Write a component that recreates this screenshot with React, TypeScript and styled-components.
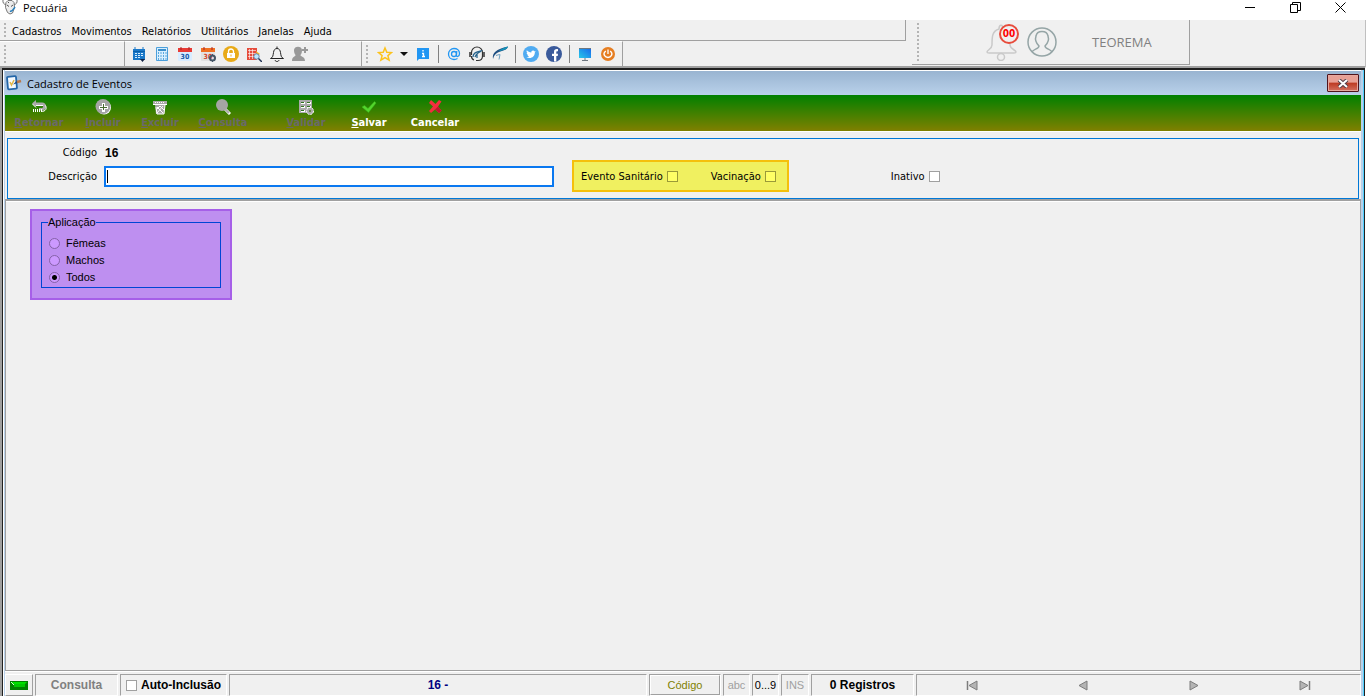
import React from 'react';
import styled, { createGlobalStyle, css } from 'styled-components';

const face = '#f0f0f0';
const shade = '#a0a0a0';
const uiFont = '"DejaVu Sans Condensed", "Noto Sans", sans-serif';
const segoe = '"Open Sans", "Noto Sans", sans-serif';
const msSans = '"Liberation Sans", Arial, sans-serif';

const Global = createGlobalStyle`
  * { box-sizing: border-box; }
  body { margin: 0; background: ${face}; color: #000; font: 11px/16px ${uiFont}; }
  button { font: inherit; color: inherit; padding: 0; margin: 0; border: 0; background: none; }
  svg { display: block; flex: none; }
`;

const Shell = styled.div`
  display: flex;
  flex-direction: column;
  min-height: 100vh;
`;

const TitleBar = styled.header`
  display: flex;
  align-items: center;
  height: 20px;
  padding: 0 20px 6px 2px;
  gap: 5px;
  background: #fff;
  font: 11px/16px ${segoe};
`;

const AppName = styled.span`
  flex: 1;
  padding-top: 2px;
`;

const WindowButtons = styled.div`
  display: flex;
  gap: 34px;
`;

const Bars = styled.div`
  display: flex;
  height: 46px;
  background: ${face};
`;

const BarStack = styled.div`
  flex: 1;
  min-width: 640px;
`;

const Grip = styled.i`
  width: 2px;
  align-self: stretch;
  margin: 3px 0;
  background: repeating-linear-gradient(#b4b4b4 0 2px, transparent 2px 4px);
`;

const MenuBar = styled.nav`
  display: flex;
  height: 21px;
  padding: 0 4px;
  gap: 6px;
  border-bottom: 1px solid ${shade};
  border-right: 1px solid ${shade};
`;

const MenuList = styled.div`
  display: flex;
  align-items: center;
  gap: 10px;
  padding-top: 3px;
`;

const MenuItem = styled.button`
  white-space: nowrap;
`;

const ToolRow = styled.div`
  display: flex;
  height: 25px;
`;

const ToolGroup = styled.div<{ $width: number; $gripped?: boolean }>`
  display: flex;
  align-items: center;
  gap: 7px;
  width: ${(p) => p.$width}px;
  padding-left: ${(p) => (p.$gripped ? 4 : 6)}px;
  border-right: 1px solid ${shade};
  border-top: 1px solid #fff;
  ${Grip} { margin-right: 2px; }
`;

const IconButton = styled.button<{ $narrow?: boolean }>`
  width: ${(p) => (p.$narrow ? 8 : 16)}px;
  height: 16px;
`;

const Divider = styled.i`
  width: 1px;
  height: 18px;
  background: #808080;
`;

const UserBar = styled.section`
  display: flex;
  width: 278px;
  height: 45px;
  margin-left: 6px;
  padding: 0 0 0 5px;
  border: solid ${shade};
  border-width: 0 1px 1px 0;
  align-items: center;
`;

const Bell = styled.button`
  position: relative;
  width: 34px;
  height: 38px;
  margin-left: 66px;
`;

const BellCount = styled.span`
  position: absolute;
  top: 1px;
  right: 0;
  width: 20px;
  height: 20px;
  border: 2px solid #e74c3c;
  border-radius: 50%;
  background: ${face};
  color: #f00;
  font: bold 10px/16px ${uiFont};
  text-align: center;
`;

const UserName = styled.span`
  margin-left: 27px;
  color: #808080;
  font: 13px/18px ${segoe};
`;

const BarRest = styled.div`
  width: 176px;
  border-right: 1px solid #c0c0c0;
`;

const Workspace = styled.main`
  flex: 1;
  display: flex;
  border-top: 2px solid ${shade};
  border-left: 2px solid ${shade};
  border-right: 1px solid #fff;
`;

const Window = styled.section`
  flex: 1;
  display: flex;
  flex-direction: column;
  min-width: 0;
  border: solid #202020;
  border-width: 2px 1px 0 1px;
  box-shadow: inset -1px 0 #4fd0ff, inset 1px 0 #fff;
  padding: 0 3px 0 2px;
  background: #b9d1ea;
`;

const Caption = styled.div`
  display: flex;
  align-items: center;
  gap: 5px;
  height: 25px;
  padding: 0 2px 0 1px;
  background: linear-gradient(#99b4d1, #b9d1ea);
  border-top: 1px solid #fff;
  font: 11px/16px ${segoe};
`;

const CaptionText = styled.h1`
  flex: 1;
  margin: 0;
  padding-top: 2px;
  font: inherit;
`;

const CloseButton = styled.button`
  display: grid;
  place-items: center;
  width: 32px;
  height: 18px;
  border: 1px solid #50141c;
  border-radius: 1px;
  background: linear-gradient(#e8a095 0 45%, #bd3a22 50%, #d37060);
  box-shadow: inset 0 0 0 1px #e6a89f;
`;

const Commands = styled.div`
  display: flex;
  height: 36px;
  background: linear-gradient(#008000, #808000);
`;

const Command = styled.button<{ $width: number; $gapBefore?: boolean }>`
  display: flex;
  flex-direction: column;
  align-items: center;
  width: ${(p) => p.$width}px;
  padding-top: 4px;
  margin-left: ${(p) => (p.$gapBefore ? 16 : 0)}px;
  font: bold 11px/15px ${uiFont};
  color: #fff;
  &:disabled { color: #696969; }
`;

const Form = styled.form`
  flex: 1;
  display: flex;
  flex-direction: column;
  background: ${face};
  border-top: 1px solid #fff;
`;

const Fields = styled.div`
  margin: 6px 2px 0;
  padding: 5px 0 6px;
  border: 1px solid #0078d7;
`;

const FieldRow = styled.div<{ $tall?: boolean }>`
  display: flex;
  align-items: center;
  height: ${(p) => (p.$tall ? 32 : 16)}px;
`;

const FieldLabel = styled.label`
  width: 89px;
  margin-right: 7px;
  padding-top: 2px;
  text-align: right;
`;

const Code = styled.output`
  padding: 2px 0 0 1px;
  font: bold 12px/16px ${msSans};
`;

const TextInput = styled.input`
  width: 450px;
  height: 21px;
  border: 2px solid #0a78f0;
  outline: 0;
  padding: 0 3px;
  font: inherit;
  background: linear-gradient(#000, #000) 1px 2px / 1px 13px no-repeat #fff;
`;

const Highlight = styled.div`
  display: flex;
  align-items: center;
  gap: 33px;
  height: 32px;
  margin: 0 102px 0 18px;
  padding: 0 11px 0 7px;
  background: #f0f060;
  border: 2px solid #f5c00c;
`;

const CheckLabel = styled.label`
  display: flex;
  align-items: center;
  gap: 4px;
  white-space: nowrap;
`;

const LabelText = styled.span`
  padding-top: 2px;
`;

const Tick = styled.input<{ $yellow?: boolean }>`
  appearance: none;
  width: 11px;
  height: 11px;
  margin: 0;
  border: 1px solid ${(p) => (p.$yellow ? '#9a9a38' : '#a0a0a0')};
  background: ${(p) => (p.$yellow ? '#ffff66' : '#fff')};
`;

const Sheet = styled.div`
  flex: 1;
  padding: 8px 24px;
  border: 1px solid ${shade};
  border-top: 2px solid ${shade};
  box-shadow: inset 0 1px #fff;
`;

const PurpleBox = styled.div`
  width: 202px;
  height: 91px;
  padding: 4px 9px 10px;
  background: #be8ff0;
  border: 2px solid #a65fe8;
`;

const Options = styled.fieldset`
  min-width: 0;
  height: 73px;
  margin: 0;
  padding: 5px 7px 0;
  border: 1px solid #0046d5;
  font: 11px/17px ${msSans};
`;

const Legend = styled.legend`
  margin-left: -1px;
  padding: 0;
  line-height: 15px;
`;

const RadioLabel = styled.label`
  display: flex;
  align-items: center;
  gap: 6px;
  height: 17px;
`;

const Radio = styled.input`
  appearance: none;
  width: 11px;
  height: 11px;
  margin: 0;
  border: 1px solid #8562a8;
  border-radius: 50%;
  background: #cc99ff;
  &:checked { background: radial-gradient(circle, #000 0 2px, #cc99ff 3px); }
`;

const Status = styled.footer`
  display: flex;
  gap: 2px;
  height: 25px;
  padding-top: 2px;
  border-top: 1px solid #fff;
  background: ${face};
  font: 11px/20px ${msSans};
`;

const sunken = css`
  border: solid;
  border-width: 1px;
  border-color: ${shade} #fff #fff ${shade};
`;

const Cell = styled.div<{ $width?: number; $tone?: string; $bold?: boolean }>`
  ${sunken}
  display: flex;
  align-items: center;
  justify-content: center;
  ${(p) => (p.$width ? `width: ${p.$width}px;` : 'flex: 1;')}
  color: ${(p) => p.$tone ?? '#000'};
  ${(p) => p.$bold && 'font-weight: bold; font-size: 12px;'}
  white-space: nowrap;
`;

const LedCell = styled.div`
  display: grid;
  place-items: center;
  width: 28px;
  border: solid;
  border-width: 1px;
  border-color: #fff ${shade} ${shade} #fff;
`;

const OrderButton = styled.button`
  align-self: stretch;
  flex: 1;
  border: 1px solid;
  border-color: #fff ${shade} ${shade} #fff;
  line-height: 18px;
`;

const NavCell = styled.nav`
  ${sunken}
  display: grid;
  grid-template-columns: repeat(4, 1fr);
  width: 445px;
`;

const NavButton = styled.button`
  display: grid;
  place-items: center;
`;

const Svg = ({ w = 16, h = 16, box, children }: { w?: number; h?: number; box?: string; children: React.ReactNode }) => (
  <svg width={w} height={h} viewBox={box ?? `0 0 ${w} ${h}`} fill="none" aria-hidden="true">{children}</svg>
);

const AppLogo = () => (
  <Svg>
    <path d="M1 .5c-.5 3 .5 5 3 5M15 .5c.5 3-.5 5-3 5M4 3.500l2-2h4l2 2 .5 5-2 5.500L8 15l-2.500-1.500-2-5z" stroke="#777" fill="#ececec" />
    <path d="M5 6l2 1.500M11 6L9 7.500M6 3l1 1" stroke="#555" />
    <path d="M8 12c2 1 3-1 5-4" stroke="#2a80bd" strokeWidth="1.500" />
  </Svg>
);

const Calendar = () => (
  <Svg>
    <path d="M2 3h12v11H2z" fill="#1b78c8" />
    <path d="M2 5.500h12" stroke="#0b5fa8" />
    <path d="M4 7.500h9M4 9.500h9M4 11.500h6" stroke="#d8efff" strokeDasharray="2 1" />
    <path d="M4 1v3M12 1v3" stroke="#1b78c8" />
    <path d="M9 13h5l-2.500 3z" fill="#124" />
  </Svg>
);

const Calculator = () => (
  <Svg>
    <path d="M2.500 1.500h11v13h-11z" fill="#d8efff" stroke="#4b9fdb" />
    <path d="M4 3h8v2H4z" fill="#3b8fcc" />
    <path d="M4.500 6v8M7 6v8M9.500 6v8M12 6v8" stroke="#5aa8de" strokeDasharray="2 1" />
  </Svg>
);

const Day30 = ({ orange }: { orange?: boolean }) => (
  <Svg>
    <rect x="1" y="2" width="14" height="13" rx="1" fill={orange ? '#e2e2e2' : '#d8ecff'} />
    <path d="M1 2h14v4H1z" fill={orange ? '#f07022' : '#e83b35'} />
    <path d="M4 1v3M12 1v3" stroke="#a22" strokeWidth="1" />
    <text x="8" y="13" textAnchor="middle" fontSize="7" fontWeight="bold" fontFamily={uiFont} fill={orange ? '#d4462c' : '#1558a8'}>30</text>
    {orange && <><circle cx="12.500" cy="12" r="2.500" stroke="#456" strokeWidth="2" /><path d="M12.500 8v8M8.500 12h8" stroke="#456" strokeDasharray="1 6" /></>}
  </Svg>
);

const Lock = () => (
  <Svg>
    <circle cx="8" cy="8" r="8" fill="#e8aa18" />
    <path d="M4 7h8v5H4z" fill="#fff" />
    <path d="M5.500 7.500V5.500a2.500 2.500 0 0 1 5 0v2" stroke="#fff" strokeWidth="1.300" />
    <path d="M8 8.500v2" stroke="#e8aa18" />
  </Svg>
);

const GridSearch = () => (
  <Svg>
    <path d="M1 2h10v12H1z" fill="#e64c3c" />
    <path d="M2 4.500h8M2 7.500h8M2 10.500h8M3.500 3v10M6.500 3v10" stroke="#fff" strokeWidth=".6" />
    <path d="M10 5l4 3-3 2z" fill="#f5b92a" />
    <circle cx="10.500" cy="10.500" r="2.700" fill="#bde7ff" stroke="#68a" />
    <path d="M12.500 12.500L16 16" stroke="#235" strokeWidth="1.500" />
  </Svg>
);

const BellSmall = () => (
  <Svg>
    <path d="M8 .5v2M1.500 12.500c2.500-1 2.500-3 3-6 .3-2.500 1.500-4 3.500-4s3.200 1.500 3.500 4c.5 3 .5 5 3 6zM6 14c.5 2 3.500 2 4 0" stroke="#222" />
  </Svg>
);

const UserPlus = () => (
  <Svg>
    <path d="M2 4c0-4.500 8-4.500 8 0 0 2-.5 4-1.500 5 0 2 4.500 1 4.500 6H0c0-5 3.500-4 3.500-6C2.500 8 2 6 2 4z" fill="#999" />
    <path d="M13 1v6M10 4h6" stroke="#999" strokeWidth="2" />
  </Svg>
);

const Star = () => (
  <Svg><path d="M8 2l1.800 4.300 4.700.3-3.600 3 1.200 4.600L8 11.600l-4.100 2.600 1.200-4.600-3.600-3 4.700-.3z" stroke="#fcc21c" strokeWidth="1.500" /></Svg>
);

const Info = () => (
  <Svg>
    <path d="M2 2h12v11H4l-2 2z" fill="#2196f3" />
    <path d="M8 4v1.500M7 7.500h1.500v3M7 10.500h3" stroke="#fff" strokeWidth="1.300" />
  </Svg>
);

const At = () => (
  <Svg>
    <circle cx="8" cy="8" r="2.500" stroke="#2196f3" strokeWidth="1.300" />
    <path d="M10.800 5l-.5 4.500c.5 2 3.200.8 3.200-2C13.500 4 11 2.500 8 2.500S2.500 5 2.500 8s2 5.500 5.500 5.500c1.500 0 2.500-.3 3.500-1" stroke="#2196f3" strokeWidth="1.300" />
  </Svg>
);

const Headset = () => (
  <Svg>
    <path d="M2.500 9V6.500a5.500 5.500 0 0 1 11 0V10c0 3-2 4.500-4.500 4.500H7M2.500 10c0 2 1 3.500 2.500 4" stroke="#333" strokeWidth="1.200" />
    <path d="M1 6v5M15 6v5" stroke="#333" strokeWidth="1.500" />
    <path d="M4 11c0-4 3-5 8-6-2 2-5 2-6 6M8 8v4" stroke="#28648c" strokeWidth="1.300" />
  </Svg>
);

const Leaf = () => (
  <Svg>
    <path d="M1 13c-1-6 3-10 15-12.500C15 4 11 4.500 7 6c-3 1-5 3-6 7z" fill="#1f4f82" />
    <path d="M7 4.500c3-2 5-3 9-4-1 3.500-5 3.500-8 4.500z" fill="#1593b8" />
    <path d="M4 9.500c3-1 4-1 4-1l-1 5" stroke="#6c9fc0" />
  </Svg>
);

const Twitter = () => (
  <Svg>
    <circle cx="8" cy="8" r="8" fill="#50abf1" />
    <path d="M12.800 5.200l-1.100.3c-.8-1.800-3.700-1.200-3.400 1C6.500 6.500 5 5.600 3.900 4.300c-.7 1.200-.2 2.200.6 2.800l-.8-.2c0 1 .7 1.700 1.600 2h-.8c.3.800 1 1.200 1.700 1.300-.8.700-1.800.8-2.800.8 3.900 2.300 8.500 0 8.400-4.600z" fill="#fff" />
  </Svg>
);

const Facebook = () => (
  <Svg>
    <circle cx="8" cy="8" r="8" fill="#3a5a9b" />
    <path d="M8 15.500V10H6V7.700h2V6c0-2.300 1.500-3.200 4-2.800v2c-1.300-.1-1.700 0-1.700 1.100v1.400H12l-.3 2.300h-1.400v5.500z" fill="#fff" />
  </Svg>
);

const Monitor = () => (
  <Svg>
    <defs><linearGradient id="screen" x1="0" y1="1" x2="1" y2="0"><stop stopColor="#27c8e8" /><stop offset="1" stopColor="#1767ec" /></linearGradient></defs>
    <path d="M2 2h12v10H2z" fill="url(#screen)" />
    <path d="M2 2.500h12M8 12v2M5 14.500h6" stroke="#6e7780" />
  </Svg>
);

const Power = () => (
  <Svg>
    <circle cx="8" cy="8" r="7" fill="#e67e22" />
    <path d="M5.800 5c-4 3-.5 6.500 2.200 6.500S14 8 10.200 5M8 3.500V8" stroke="#fff" strokeWidth="1.300" />
  </Svg>
);

const FormIcon = () => (
  <Svg>
    <rect x="1.500" y="1.500" width="9" height="12.500" rx="1" transform="rotate(-5 6 8)" fill="#f5faff" stroke="#2366a8" strokeWidth="1.800" />
    <path d="M4 7l1.500 3L8 5" stroke="#e2b748" strokeWidth="1.500" />
    <path d="M7 9.500l4-4 1 2.500z" fill="#1e4b85" />
    <path d="M11 7l4-1" stroke="#b8794a" strokeWidth="2.500" />
  </Svg>
);

const ReturnIcon = () => (
  <Svg>
    <path d="M1 4.500L5 1v2.500h6c5.500 0 5.500 8 0 8H8V9h3c1.500 0 1.500-3 0-3H5v2z" fill="#a9a9a9" />
    <path d="M5 6.500h7M10 12.500c5 0 6-3 4.500-6M5 8.500L1.500 5" stroke="#fff" />
    <path d="M2 11.500h9" stroke="#fff" strokeWidth="3" strokeDasharray="1 1" />
  </Svg>
);

const AddIcon = () => (
  <Svg>
    <circle cx="9" cy="8.500" r="7" fill="#fff" />
    <circle cx="8" cy="7.500" r="7.500" fill="#a5a5a5" />
    <path d="M7 4h3v3h3v3h-3v3H7v-3H4V7h3z" fill="#fff" />
    <path d="M8.500 5v6M5 8.500h7" stroke="#466a30" />
  </Svg>
);

const TrashIcon = () => (
  <Svg>
    <path d="M1 2h14v3H1zM3 6h10l-1 9H4z" fill="#a8a8a8" />
    <path d="M1 5.500h14M4 8l1 7h7l1-9M5 8l6 6M8 7l4 4M11 7l-6 7M8 7l-3 3" stroke="#fff" />
    <path d="M3 3.500h10" stroke="#fff" strokeDasharray="1 1" />
  </Svg>
);

const SearchIcon = () => (
  <Svg>
    <path d="M10 10l5 5" stroke="#fff" strokeWidth="3" />
    <circle cx="7" cy="6" r="6" fill="#a5a5a5" />
    <path d="M10 10l4 4" stroke="#aaa" strokeWidth="2" />
  </Svg>
);

const ValidateIcon = () => (
  <Svg>
    <path d="M1 1h13v13H1z" fill="#aaa" />
    <path d="M3 3h4v2H3zM3 7h4v2H3zM3 11h4v2H3zM9 3h4v2H9zM9 7h4v2H9z" fill="#fff" />
    <path d="M3 3.500h3M3 7.500h3M3 11.500h3M9 3.500h3M9 7.500h3" stroke="#31751d" />
    <circle cx="12" cy="12" r="3.500" fill="#aaa" stroke="#fff" strokeDasharray="2 1" />
    <circle cx="12" cy="12" r="1" fill="#4d7a20" />
  </Svg>
);

const CheckIcon = () => (
  <Svg><path d="M1 8l2.500-1.500L7 9.500l6.500-7L15 4l-7.500 9.500z" fill="#54d52d" stroke="#39b91d" strokeWidth=".5" /></Svg>
);

const CancelIcon = () => (
  <Svg>
    <path d="M2 4l2-3 4.500 4L12 1l2.500 1.500L11 7.500l3.500 4L12 14l-4-3.500L4 14l-2-2 4-4.500z" fill="#f32e3f" />
    <path d="M8 10.500l3-3 3.500 4L12 14z" fill="#bd1830" />
  </Svg>
);

const mainTools: [string, React.ReactNode][] = [
  ['Agenda', <Calendar />], ['Calculadora', <Calculator />], ['Calendário', <Day30 />], ['Configurar calendário', <Day30 orange />],
  ['Bloquear', <Lock />], ['Pesquisar', <GridSearch />], ['Avisos', <BellSmall />], ['Novo usuário', <UserPlus />],
];

const commands: { icon: React.ReactNode; key: string; rest: string; width: number; off?: boolean; gap?: boolean }[] = [
  { icon: <ReturnIcon />, key: 'R', rest: 'etornar', width: 68, off: true },
  { icon: <AddIcon />, key: 'I', rest: 'ncluir', width: 60, off: true },
  { icon: <TrashIcon />, key: 'E', rest: 'xcluir', width: 54, off: true },
  { icon: <SearchIcon />, key: 'C', rest: 'onsulta', width: 72, off: true },
  { icon: <ValidateIcon />, key: 'V', rest: 'alidar', width: 62, off: true, gap: true },
  { icon: <CheckIcon />, key: 'S', rest: 'alvar', width: 64 },
  { icon: <CancelIcon />, key: '', rest: 'Cancelar', width: 68 },
];

const navs: [string, string, string][] = [
  ['Primeiro', 'M11 2v9L3 6.500z', 'M1.500 2v9'],
  ['Anterior', 'M10 2v9L2 6.500z', ''],
  ['Próximo', 'M2 2v9l8-4.500z', ''],
  ['Último', 'M1 2v9l8-4.500z', 'M10.500 2v9'],
];

export default function App() {
  return (
    <Shell>
      <Global />
      <TitleBar>
        <AppLogo />
        <AppName>Pecuária</AppName>
        <WindowButtons>
          <button aria-label="Minimizar"><Svg w={11} h={11}><path d="M0 5.500h10" stroke="#000" /></Svg></button>
          <button aria-label="Restaurar"><Svg w={11} h={11}><path d="M.5 2.500h7v8h-7zM2.500 2.500v-2h8v8h-3" stroke="#000" /></Svg></button>
          <button aria-label="Fechar"><Svg w={11} h={11}><path d="M.5.5l10 10M10.500.5l-10 10" stroke="#000" /></Svg></button>
        </WindowButtons>
      </TitleBar>

      <Bars>
        <BarStack>
          <MenuBar>
            <Grip />
            <MenuList>
              {['Cadastros', 'Movimentos', 'Relatórios', 'Utilitários', 'Janelas', 'Ajuda'].map((m) => <MenuItem key={m}>{m}</MenuItem>)}
            </MenuList>
          </MenuBar>
          <ToolRow>
            <ToolGroup $width={125} $gripped><Grip /></ToolGroup>
            <ToolGroup $width={237}>
              {mainTools.map(([name, icon]) => <IconButton key={name} aria-label={name}>{icon}</IconButton>)}
            </ToolGroup>
            <ToolGroup $width={261} $gripped>
              <Grip />
              <IconButton aria-label="Favoritos"><Star /></IconButton>
              <IconButton $narrow aria-label="Abrir favoritos"><Svg w={8} h={16}><path d="M0 6h8L4 10z" fill="#111" /></Svg></IconButton>
              <IconButton aria-label="Informações"><Info /></IconButton>
              <Divider />
              <IconButton aria-label="E-mail"><At /></IconButton>
              <IconButton aria-label="Suporte"><Headset /></IconButton>
              <IconButton aria-label="Site"><Leaf /></IconButton>
              <Divider />
              <IconButton aria-label="Twitter"><Twitter /></IconButton>
              <IconButton aria-label="Facebook"><Facebook /></IconButton>
              <Divider />
              <IconButton aria-label="Acesso remoto"><Monitor /></IconButton>
              <IconButton aria-label="Sair"><Power /></IconButton>
            </ToolGroup>
          </ToolRow>
        </BarStack>
        <UserBar>
          <Grip />
          <Bell aria-label="Notificações">
            <Svg w={34} h={38}>
              <path d="M2 29c0-2 5-3 5-7 0-8 0-14 7-16 0-5 4-5 4 0 7 2 7 8 7 16 0 4 6 5 6 7 0 1-1 1-2 1H4c-1 0-2 0-2-1z" stroke="#c9c9c9" strokeWidth="1.500" />
              <circle cx="16" cy="34" r="3.500" stroke="#c9c9c9" strokeWidth="1.500" />
            </Svg>
            <BellCount>00</BellCount>
          </Bell>
          <Svg w={46} h={30}>
            <circle cx="23" cy="15" r="14" stroke="#95a5a6" strokeWidth="1.500" />
            <path d="M13 25c1-3 7-3 7-6-3-3-4-7-3-10 1-6 11-6 12 0 1 3 0 7-3 10 0 3 6 3 7 6" stroke="#95a5a6" strokeWidth="1.500" />
          </Svg>
          <UserName>TEOREMA</UserName>
        </UserBar>
        <BarRest />
      </Bars>

      <Workspace>
        <Window>
          <Caption>
            <FormIcon />
            <CaptionText>Cadastro de Eventos</CaptionText>
            <CloseButton aria-label="Fechar janela">
              <Svg w={12} h={9}><path d="M2 1l8 7M10 1L2 8" stroke="#54404a" strokeWidth="4" /><path d="M2 1l8 7M10 1L2 8" stroke="#fff" strokeWidth="2" /></Svg>
            </CloseButton>
          </Caption>
          <Commands>
            {commands.map((c) => (
              <Command key={c.rest} $width={c.width} $gapBefore={c.gap} disabled={c.off}>
                {c.icon}
                <span><u>{c.key}</u>{c.rest}</span>
              </Command>
            ))}
          </Commands>
          <Form onSubmit={(e) => e.preventDefault()}>
            <Fields>
              <FieldRow>
                <FieldLabel htmlFor="codigo">Código</FieldLabel>
                <Code id="codigo">16</Code>
              </FieldRow>
              <FieldRow $tall>
                <FieldLabel htmlFor="descricao">Descrição</FieldLabel>
                <TextInput id="descricao" type="text" />
                <Highlight>
                  <CheckLabel><LabelText>Evento Sanitário</LabelText><Tick type="checkbox" $yellow /></CheckLabel>
                  <CheckLabel><LabelText>Vacinação</LabelText><Tick type="checkbox" $yellow /></CheckLabel>
                </Highlight>
                <CheckLabel><LabelText>Inativo</LabelText><Tick type="checkbox" /></CheckLabel>
              </FieldRow>
            </Fields>
            <Sheet>
              <PurpleBox>
                <Options>
                  <Legend>Aplicação</Legend>
                  {['Fêmeas', 'Machos', 'Todos'].map((o) => (
                    <RadioLabel key={o}><Radio type="radio" name="aplicacao" defaultChecked={o === 'Todos'} />{o}</RadioLabel>
                  ))}
                </Options>
              </PurpleBox>
            </Sheet>
          </Form>
          <Status>
            <LedCell><Svg w={18} h={9}><path d="M0 0h18v9H0z" fill="#008000" /><path d="M1 1h16l-3 3H4z" fill="#00e000" /><path d="M4 3h11v3H4z" fill="#00c800" /><path d="M1 1l3 3" stroke="#cfc" /></Svg></LedCell>
            <Cell $width={83} $tone="#808080" $bold>Consulta</Cell>
            <Cell $width={107} $bold><CheckLabel><Tick type="checkbox" />Auto-Inclusão</CheckLabel></Cell>
            <Cell $tone="#000080" $bold>16 -</Cell>
            <Cell $width={72} $tone="#808000"><OrderButton type="button">Código</OrderButton></Cell>
            <Cell $width={27} $tone={shade}>abc</Cell>
            <Cell $width={27}>0...9</Cell>
            <Cell $width={28} $tone={shade}>INS</Cell>
            <Cell $width={103} $bold>0 Registros</Cell>
            <NavCell aria-label="Registros">
              {navs.map(([name, arrow, bar]) => (
                <NavButton key={name} aria-label={name}>
                  <Svg w={12} h={13}><path d={arrow} fill="#b4b4b4" stroke="#7c7c7c" /><path d={bar} stroke="#7c7c7c" strokeWidth="1.500" /></Svg>
                </NavButton>
              ))}
            </NavCell>
          </Status>
        </Window>
      </Workspace>
    </Shell>
  );
}
